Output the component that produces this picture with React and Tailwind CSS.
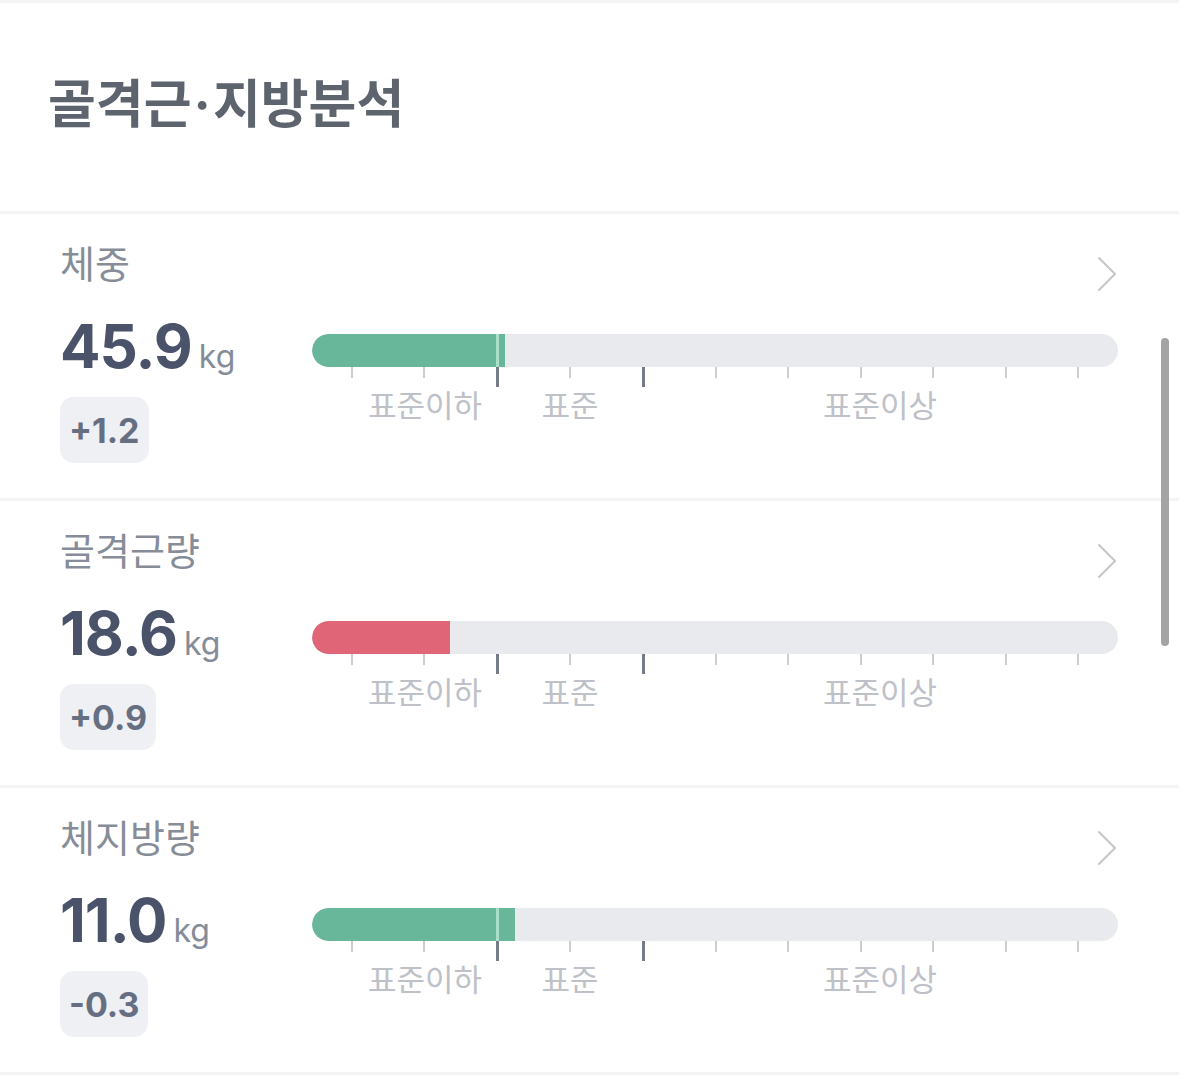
import React from "react";

const KR = { fontFamily: '"Noto Sans CJK KR", "Noto Sans", sans-serif' };
const NUM = { fontFamily: 'Inter, "Noto Sans CJK KR", sans-serif' };

const metrics = [
  { label: "체중", value: "45.9", diff: "+1.2", fill: 193, color: "bg-[#68b79a]", marker: true },
  { label: "골격근량", value: "18.6", diff: "+0.9", fill: 138, color: "bg-[#e06577]", marker: false },
  { label: "체지방량", value: "11.0", diff: "-0.3", fill: 203, color: "bg-[#68b79a]", marker: true },
];

// tick index 2 and 4 mark the standard range
const ticks = Array.from({ length: 11 }, (_, i) => i === 2 || i === 4);

const scaleLabels = [
  { text: "표준이하", center: 113 },
  { text: "표준", center: 258 },
  { text: "표준이상", center: 568 },
];

function Chevron() {
  return (
    <svg width="22" height="36" viewBox="0 0 22 36" fill="none" className="mt-[14px]">
      <polyline points="3,2 19,18 3,34" stroke="#c6c6c8" strokeWidth="2" strokeLinecap="round" strokeLinejoin="round" />
    </svg>
  );
}

function RangeBar({ fill, color, marker }) {
  return (
    <div className="w-[806px]">
      <div className="relative h-[33px] rounded-full bg-[#e9eaed] overflow-hidden">
        <div className={`h-full rounded-l-full ${color}`} style={{ width: fill }} />
        {marker && <div className="absolute top-0 left-[184px] h-full w-[3px] bg-[#a9e0c9]" />}
      </div>
      <div className="flex justify-between items-start h-[20px] px-[39px]">
        {ticks.map((major, i) =>
          major ? (
            <div key={i} className="w-[3px] h-[20px] bg-[#757c88]" />
          ) : (
            <div key={i} className="w-[2px] h-[11px] bg-[#cbcdd1]" />
          )
        )}
      </div>
      <div className="relative h-[34px]" style={KR}>
        {scaleLabels.map((s) => (
          <span
            key={s.text}
            className="absolute top-0 -translate-x-1/2 text-[31px] leading-[34px] text-[#bec1c7] whitespace-nowrap"
            style={{ left: s.center }}
          >
            {s.text}
          </span>
        ))}
      </div>
    </div>
  );
}

function MetricRow({ label, value, diff, fill, color, marker }) {
  return (
    <div className="h-[287px] border-b-[3px] border-[#f2f3f5] pl-[60px] pr-[61px] pt-[28px]">
      <div className="flex justify-between items-start h-[40px]">
        <span className="text-[38px] leading-[40px] text-[#878d98]" style={KR}>
          {label}
        </span>
        <Chevron />
      </div>
      <div className="flex mt-[34px]">
        <div className="w-[252px] shrink-0">
          <div className="flex items-baseline h-[60px]" style={NUM}>
            <span className="text-[60px] leading-[60px] font-bold text-[#4a5369] tracking-[-1px]">{value}</span>
            <span className="ml-[7px] text-[32px] text-[#858c99]">kg</span>
          </div>
          <div
            className="inline-flex items-center h-[66px] mt-[21px] px-[9px] rounded-[14px] bg-[#eff0f4] text-[34px] font-bold text-[#666f82]"
            style={NUM}
          >
            {diff}
          </div>
        </div>
        <div className="pt-[18px]">
          <RangeBar fill={fill} color={color} marker={marker} />
        </div>
      </div>
    </div>
  );
}

export default function App() {
  return (
    <div className="relative w-[1179px] h-[1075px] bg-white overflow-hidden">
      <div className="h-[214px] border-t-[3px] border-b-[3px] border-[#f2f3f5] pl-[48px] pt-[68px]">
        <h1 className="text-[52px] leading-[60px] font-bold text-[#5e646e]" style={KR}>
          골격근<span className="mx-[2px]" style={NUM}>·</span>지방분석
        </h1>
      </div>
      {metrics.map((m) => (
        <MetricRow key={m.label} {...m} />
      ))}
      {/* scroll indicator */}
      <div className="absolute left-[1161px] top-[338px] w-[8px] h-[308px] rounded-full bg-[#a4a4a4]" />
    </div>
  );
}
